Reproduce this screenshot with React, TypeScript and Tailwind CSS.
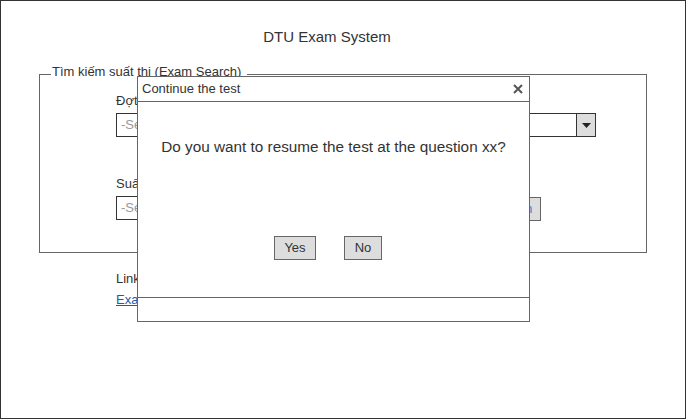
export default function App() {
  return (
    <div className="relative w-[686px] h-[419px] border border-[#333] bg-white text-[#333] font-['Liberation_Sans',Arial,sans-serif]">
      <div className="mt-[28px] h-4 pr-[32px] text-center text-[15px] leading-4">DTU Exam System</div>

      <fieldset className="mt-[19px] mx-[38px] border border-[#666]">
        <legend className="ml-[11px] pl-[1px] pr-[6px] pb-1 text-[13px] leading-4">
          Tìm kiếm suất thi (Exam Search)
        </legend>
        <div className="pl-[76px] pr-[50px] pt-[9px] pb-[31px] text-[13px]">
          <div className="leading-4">Đợt thi</div>
          <div className="mt-1 flex h-6 border border-[#333]">
            <div className="flex-1 pl-1 leading-[22px] text-[#999]">-Select-</div>
            <div className="flex w-[19px] items-center justify-center border-l border-[#333] bg-[#ddd]">
              <svg width="9" height="5" viewBox="0 0 9 5">
                <path d="M0 0h9L4.5 5z" fill="#222" />
              </svg>
            </div>
          </div>

          <div className="mt-[39px] leading-4">Suất thi</div>
          <div className="mt-1 flex items-start">
            <div className="h-6 w-[340px] border border-[#333] pl-1 leading-[22px] text-[#999]">-Select-</div>
            <button className="ml-[14px] mt-[1px] h-6 w-[71px] border border-[#666] bg-[#ddd] text-[13px] text-[#3b82d6]">
              Tìm kiếm
            </button>
          </div>
        </div>
      </fieldset>

      <div className="mt-[18px] pl-[115px] text-[13px] leading-4">
        <div>Link bài thi:</div>
        <a className="mt-[5px] block text-[#1a5ea8] underline">Exam link</a>
      </div>

      {/* modal dialog */}
      <div className="absolute left-[136px] top-[75px] flex h-[246px] w-[393px] flex-col border border-[#666] bg-white">
        <div className="flex h-[25px] items-center justify-between border-b border-[#666] pl-1 pr-[6px] text-[13px]">
          <span className="leading-4">Continue the test</span>
          <svg width="10" height="10" viewBox="0 0 10 10">
            <path d="M1 1l8 8M9 1l-8 8" stroke="#555" strokeWidth="2" />
          </svg>
        </div>
        <div className="h-[195px]">
          <div className="pt-[36px] text-center text-[15.3px] leading-[18px]">
            Do you want to resume the test at the question xx?
          </div>
          <div className="mt-[80px] flex text-[13px]">
            <button className="ml-[136px] h-6 w-[42px] border border-[#666] bg-[#ddd]">Yes</button>
            <button className="ml-[28px] h-6 w-[38px] border border-[#666] bg-[#ddd]">No</button>
          </div>
        </div>
        <div className="flex-1 border-t border-[#666]" />
      </div>
    </div>
  );
}
